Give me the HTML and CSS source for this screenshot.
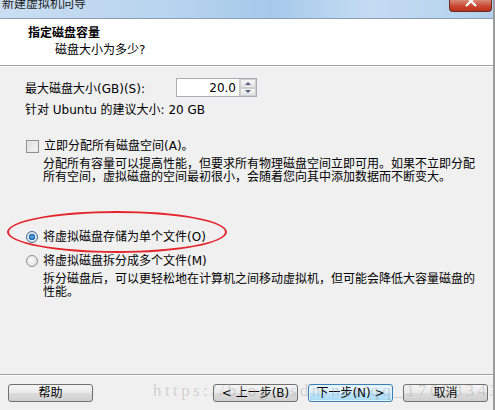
FILE: index.html
```html
<!DOCTYPE html>
<html lang="zh-CN">
<head>
  <meta charset="UTF-8">
  <title>新建虚拟机向导</title>
  <link rel="stylesheet" href="styles.css">
</head>
<body>
  <div class="window">
    <div class="titlebar">
      <span class="title">新建虚拟机向导</span>
      <span class="close">
        <svg width="14" height="10" viewBox="0 0 14 10"><path d="M2 -4 L12 6 M12 -4 L2 6" stroke="#fff" stroke-width="2.2" fill="none"/></svg>
      </span>
    </div>
    <div class="header">
      <div class="header-title">指定磁盘容量</div>
      <div class="header-sub">磁盘大小为多少?</div>
    </div>
    <div class="content">
      <div class="size-row">
        <label class="size-label" for="diskSize">最大磁盘大小(GB)(S):</label>
        <div class="spin">
          <input class="spin-input" id="diskSize" type="text" value="20.0">
          <div class="spin-btns">
            <span class="spin-btn"><span class="arrow-up"></span></span>
            <span class="spin-btn"><span class="arrow-down"></span></span>
          </div>
        </div>
      </div>
      <div class="hint">针对 Ubuntu 的建议大小: 20 GB</div>

      <div class="option check-row"><span class="checkbox"></span>立即分配所有磁盘空间(A)。</div>
      <p class="desc">分配所有容量可以提高性能，但要求所有物理磁盘空间立即可用。如果不立即分配<br>所有空间，虚拟磁盘的空间最初很小，会随着您向其中添加数据而不断变大。</p>

      <div class="option radio-first"><span class="radio checked"></span>将虚拟磁盘存储为单个文件(O)</div>
      <div class="option radio-second"><span class="radio"></span>将虚拟磁盘拆分成多个文件(M)</div>
      <p class="desc">拆分磁盘后，可以更轻松地在计算机之间移动虚拟机，但可能会降低大容量磁盘的<br>性能。</p>

      <span class="mark"></span>
    </div>
    <div class="footer">
      <button class="btn">帮助</button>
      <div class="btn-group">
        <button class="btn">&lt; 上一步(B)</button>
        <button class="btn btn-default">下一步(N) &gt;</button>
        <button class="btn">取消</button>
      </div>
      <span class="watermark">https://blog.csdn.net/qq_17033343</span>
    </div>
  </div>
</body>
</html>
```

FILE: styles.css
```css
body {
  margin: 0;
  background: #fff;
  font-family: "DejaVu Sans", "Noto Sans CJK SC", sans-serif;
  font-size: 12px;
  color: #000;
}
.window {
  width: 493px;
  height: 410px;
  border-right: 2px solid #9c9c9c;
  background-color: #f0f0f0;
  display: flex;
  flex-direction: column;
  overflow: hidden;
}
.titlebar {
  height: 18px;
  display: flex;
  justify-content: space-between;
  align-items: flex-start;
  background: linear-gradient(90deg, #c9def2 0%, #b7d3ee 35%, #a6c9ea 55%, #c4dcf2 75%, #b3d0ec 100%);
  border-bottom: 1px solid #8aa0b8;
}
.title {
  margin-top: -4px;
  padding-left: 2px;
  line-height: 16px;
  color: #1c1c1c;
}
.close {
  width: 41px;
  height: 11px;
  margin-right: 1px;
  display: flex;
  justify-content: center;
  background: linear-gradient(#d9897a, #c7432e 60%, #b8321c);
  border: 1px solid #6d2a1e;
  border-top: none;
  border-radius: 0 0 4px 4px;
}
.header {
  height: 46px;
  background: #fff;
  border-bottom: 1px solid #a0a0a0;
  box-shadow: 0 1px 0 #fff;
}
.header-title {
  padding: 7px 0 0 28px;
  line-height: 14px;
  font-weight: bold;
}
.header-sub {
  padding: 3px 0 0 55px;
  line-height: 14px;
}
.content {
  flex: 1;
  position: relative;
  padding-left: 25px;
  border-bottom: 1px solid #a0a0a0;
}
.size-row {
  display: flex;
  align-items: center;
  margin-top: 12px;
}
.size-label {
  width: 151px;
}
.spin {
  display: flex;
  height: 19px;
  border: 1px solid #abadb3;
  box-sizing: border-box;
  background: #fff;
}
.spin-input {
  width: 59px;
  border: none;
  padding: 0 3px 0 0;
  text-align: right;
  font: inherit;
  background: #fff;
}
.spin-btns {
  width: 16px;
  display: flex;
  flex-direction: column;
  border-left: 1px solid #c9c9c9;
}
.spin-btn {
  flex: 1;
  display: flex;
  align-items: center;
  justify-content: center;
  background: linear-gradient(#f6f6f6, #e3e3e3);
  border: 1px solid #d0d0d0;
}
.arrow-up, .arrow-down {
  width: 0;
  height: 0;
  border-left: 3px solid transparent;
  border-right: 3px solid transparent;
}
.arrow-up {
  border-bottom: 3px solid #4d6185;
}
.arrow-down {
  border-top: 3px solid #4d6185;
}
.hint {
  margin-top: 6px;
  line-height: 14px;
}
.option {
  display: flex;
  align-items: center;
  line-height: 14px;
}
.check-row {
  margin-top: 22px;
}
.radio-first {
  margin-top: 46px;
}
.radio-second {
  margin-top: 10px;
}
.checkbox {
  width: 11px;
  height: 11px;
  margin: 0 5px 0 1px;
  border: 1px solid #8f8f8f;
  background: linear-gradient(135deg, #dcdcdc, #f7f7f7);
  box-shadow: inset 0 0 0 1px #e8e8e8;
}
.radio {
  width: 10px;
  height: 10px;
  margin: 0 5px 0 1px;
  border: 1px solid #8f8f8f;
  border-radius: 50%;
  background: radial-gradient(circle at 40% 40%, #fdfdfd, #d6d6d6);
}
.radio.checked {
  background: radial-gradient(circle, #5ec0f0 0, #1b5fa8 3px, #e9eef3 3.5px, #d3d8de 5px);
  border-color: #3f6f9e;
}
.desc {
  margin: 5px 0 0 18px;
  line-height: 13px;
  white-space: nowrap;
}
.mark {
  position: absolute;
  left: 7px;
  top: 145px;
  width: 216px;
  height: 38px;
  border: 2px solid #e4242b;
  border-radius: 50%;
}
.footer {
  height: 35px;
  position: relative;
  display: flex;
  justify-content: space-between;
  padding: 8px 5px 0 8px;
  box-sizing: border-box;
  border-top: 1px solid #fff;
}
.btn-group {
  display: flex;
  gap: 10px;
}
.btn {
  width: 85px;
  height: 18px;
  padding: 0;
  font: inherit;
  line-height: 14px;
  color: #000;
  border: 1px solid #707070;
  border-radius: 3px;
  background: linear-gradient(#f4f4f4, #e9e9e9 50%, #dcdcdc 51%, #d0d0d0);
}
.btn-default {
  border-color: #3c7fb1;
  background: linear-gradient(#eaf6fd, #d9f0fc 50%, #bee6fd 51%, #a7d9f5);
  box-shadow: inset 0 0 0 1px #e4f3fb;
}
.watermark {
  position: absolute;
  left: 153px;
  top: 5px;
  font-family: "Liberation Serif", serif;
  font-size: 17px;
  letter-spacing: 3.4px;
  color: rgba(160, 160, 160, 0.4);
  pointer-events: none;
  white-space: nowrap;
}
```
